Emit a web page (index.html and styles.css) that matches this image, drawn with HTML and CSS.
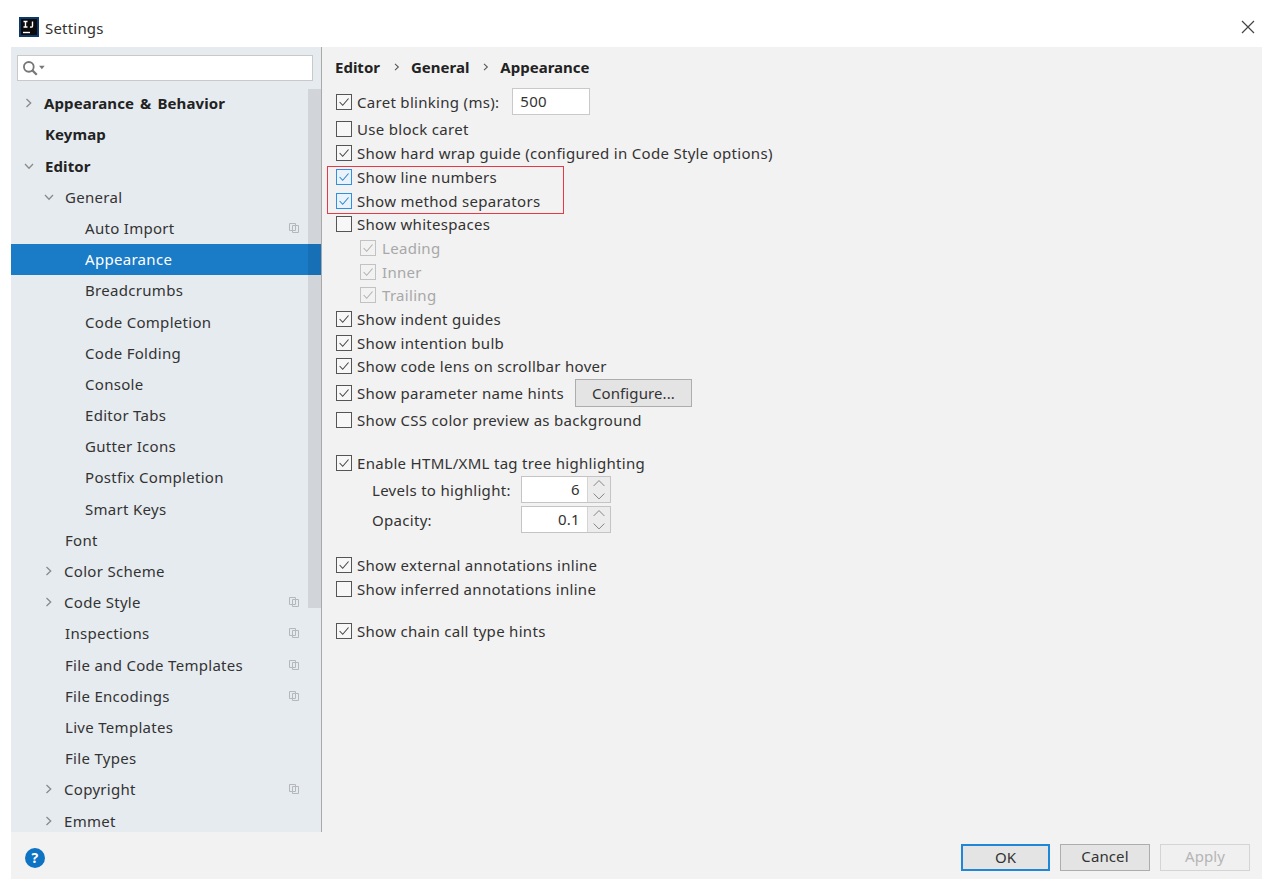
FILE: index.html
```html
<!DOCTYPE html>
<html lang="en">
<head>
<meta charset="utf-8">
<title>Settings</title>
<link rel="stylesheet" href="styles.css">
</head>
<body>
<svg class="defs" width="0" height="0" aria-hidden="true">
  <symbol id="check" viewBox="0 0 16 16"><path d="M3 8l3.5 3.8L13.2 4" fill="none" stroke="currentColor" stroke-width="1.2"/></symbol>
  <symbol id="right" viewBox="0 0 10 10"><path d="M2.5 1l4.2 4-4.2 4" fill="none" stroke="currentColor" stroke-width="1.3"/></symbol>
  <symbol id="down" viewBox="0 0 10 10"><path d="M1 3l4 4.2L9 3" fill="none" stroke="currentColor" stroke-width="1.3"/></symbol>
  <symbol id="copy" viewBox="0 0 12 12"><path d="M1.5 1.5h6v2h3v7h-6v-2h-3zM4.5 3.5h3v5h-3z" fill="none" stroke="currentColor"/></symbol>
</svg>
<div class="window">
  <header class="titlebar">
    <svg class="logo" viewBox="0 0 20 20" aria-hidden="true"><rect width="20" height="20" fill="#0c3a6a"/><rect x="2" y="2" width="16" height="16" fill="#0b0b0b"/><path d="M4 15.5h7" stroke="#fff" stroke-width="1.4"/><path d="M4.5 4.5h4M6.5 4.5v5M4.5 10h4M13.5 4.5v4.5c0 1-.8 1.3-2.5 1" fill="none" stroke="#fff" stroke-width="1.4"/></svg>
    <span class="title">Settings</span>
    <svg class="close" viewBox="0 0 14 14" aria-hidden="true"><path d="M1 1l12 12M13 1L1 13" stroke="#444" stroke-width="1.2"/></svg>
  </header>
  <div class="panel">
    <div class="main">
      <aside class="sidebar">
        <div class="search">
          <svg class="search-icon" viewBox="0 0 22 14" aria-hidden="true"><circle cx="6" cy="6" r="4.3" fill="none" stroke="#777" stroke-width="1.6"/><path d="M9 9l4 4" stroke="#777" stroke-width="2"/><path d="M15 5h5l-2.5 3z" fill="#777"/></svg>
        </div>
        <div class="thumb"></div>
        <nav class="tree">
          <div class="row lvl0 bold"><svg class="arrow"><use href="#right"/></svg><span>Appearance &amp; Behavior</span></div>
          <div class="row lvl0 bold"><i class="noarrow"></i><span>Keymap</span></div>
          <div class="row lvl0 bold"><svg class="arrow open"><use href="#down"/></svg><span>Editor</span></div>
          <div class="row lvl1"><svg class="arrow open"><use href="#down"/></svg><span>General</span></div>
          <div class="row lvl2"><span>Auto Import</span><svg class="copy"><use href="#copy"/></svg></div>
          <div class="row lvl2 selected"><span>Appearance</span></div>
          <div class="row lvl2"><span>Breadcrumbs</span></div>
          <div class="row lvl2"><span>Code Completion</span></div>
          <div class="row lvl2"><span>Code Folding</span></div>
          <div class="row lvl2"><span>Console</span></div>
          <div class="row lvl2"><span>Editor Tabs</span></div>
          <div class="row lvl2"><span>Gutter Icons</span></div>
          <div class="row lvl2"><span>Postfix Completion</span></div>
          <div class="row lvl2"><span>Smart Keys</span></div>
          <div class="row lvl1 plain"><span>Font</span></div>
          <div class="row lvl1"><svg class="arrow"><use href="#right"/></svg><span>Color Scheme</span></div>
          <div class="row lvl1"><svg class="arrow"><use href="#right"/></svg><span>Code Style</span><svg class="copy"><use href="#copy"/></svg></div>
          <div class="row lvl1 plain"><span>Inspections</span><svg class="copy"><use href="#copy"/></svg></div>
          <div class="row lvl1 plain"><span>File and Code Templates</span><svg class="copy"><use href="#copy"/></svg></div>
          <div class="row lvl1 plain"><span>File Encodings</span><svg class="copy"><use href="#copy"/></svg></div>
          <div class="row lvl1 plain"><span>Live Templates</span></div>
          <div class="row lvl1 plain"><span>File Types</span></div>
          <div class="row lvl1"><svg class="arrow"><use href="#right"/></svg><span>Copyright</span><svg class="copy"><use href="#copy"/></svg></div>
          <div class="row lvl1"><svg class="arrow"><use href="#right"/></svg><span>Emmet</span></div>
        </nav>
      </aside>
      <section class="content">
        <div class="crumbs"><span>Editor</span><svg class="sep"><use href="#right"/></svg><span>General</span><svg class="sep"><use href="#right"/></svg><span>Appearance</span></div>
        <div class="highlight"></div>
        <div class="opt first"><span class="cb"><svg><use href="#check"/></svg></span><span>Caret blinking (ms):</span><span class="field">500</span></div>
        <div class="opt"><span class="cb"></span><span>Use block caret</span></div>
        <div class="opt"><span class="cb"><svg><use href="#check"/></svg></span><span>Show hard wrap guide (configured in Code Style options)</span></div>
        <div class="opt"><span class="cb focus"><svg><use href="#check"/></svg></span><span>Show line numbers</span></div>
        <div class="opt"><span class="cb focus"><svg><use href="#check"/></svg></span><span>Show method separators</span></div>
        <div class="opt"><span class="cb"></span><span>Show whitespaces</span></div>
        <div class="opt sub off"><span class="cb"><svg><use href="#check"/></svg></span><span>Leading</span></div>
        <div class="opt sub off"><span class="cb"><svg><use href="#check"/></svg></span><span>Inner</span></div>
        <div class="opt sub off"><span class="cb"><svg><use href="#check"/></svg></span><span>Trailing</span></div>
        <div class="opt"><span class="cb"><svg><use href="#check"/></svg></span><span>Show indent guides</span></div>
        <div class="opt"><span class="cb"><svg><use href="#check"/></svg></span><span>Show intention bulb</span></div>
        <div class="opt"><span class="cb"><svg><use href="#check"/></svg></span><span>Show code lens on scrollbar hover</span></div>
        <div class="opt tall"><span class="cb"><svg><use href="#check"/></svg></span><span>Show parameter name hints</span><span class="btn configure">Configure...</span></div>
        <div class="opt"><span class="cb"></span><span>Show CSS color preview as background</span></div>
        <div class="opt gap"><span class="cb"><svg><use href="#check"/></svg></span><span>Enable HTML/XML tag tree highlighting</span></div>
        <div class="spin-row"><span class="spin-label">Levels to highlight:</span><span class="spin"><span class="spin-val">6</span><span class="spin-btns"><svg viewBox="0 0 20 14"><path d="M4 10l6-6 6 6" fill="none" stroke="#777"/></svg><svg viewBox="0 0 20 14"><path d="M4 4l6 6 6-6" fill="none" stroke="#777"/></svg></span></span></div>
        <div class="spin-row"><span class="spin-label">Opacity:</span><span class="spin"><span class="spin-val">0.1</span><span class="spin-btns"><svg viewBox="0 0 20 14"><path d="M4 10l6-6 6 6" fill="none" stroke="#777"/></svg><svg viewBox="0 0 20 14"><path d="M4 4l6 6 6-6" fill="none" stroke="#777"/></svg></span></span></div>
        <div class="opt gap2"><span class="cb"><svg><use href="#check"/></svg></span><span>Show external annotations inline</span></div>
        <div class="opt"><span class="cb"></span><span>Show inferred annotations inline</span></div>
        <div class="opt gap3"><span class="cb"><svg><use href="#check"/></svg></span><span>Show chain call type hints</span></div>
      </section>
    </div>
    <footer class="footer">
      <span class="help">?</span>
      <div class="actions">
        <span class="btn default">OK</span>
        <span class="btn">Cancel</span>
        <span class="btn disabled">Apply</span>
      </div>
    </footer>
  </div>
</div>
</body>
</html>
```
FILE: styles.css
```css
* { box-sizing: border-box; }
html, body { margin: 0; height: 100%; background: #fff; overflow: hidden; }
body { font-family: "Noto Sans", "Open Sans", sans-serif; font-size: 15px; color: #333; letter-spacing: .3px; }
.defs { position: absolute; }
.window { display: flex; flex-direction: column; height: 888px; }
.titlebar { height: 47px; flex: none; display: flex; align-items: center; padding: 0 23px 0 19px; }
.logo { width: 20px; height: 20px; margin-top: 7px; }
.title { margin-left: 6px; margin-top: 8px; font-size: 15px; color: #333; letter-spacing: .2px; }
.close { width: 14px; height: 14px; margin-left: auto; margin-top: 7px; }
.panel { margin: 0 16px 9px 11px; height: 832px; background: #f2f2f2; display: flex; flex-direction: column; }
.main { flex: 1; display: flex; min-height: 0; }
.sidebar { width: 311px; flex: none; background: #e6ebf0; border-right: 1px solid #a9a9a9; position: relative; overflow: hidden; }
.search { margin: 8px 8px 0 6px; height: 26px; background: #fff; border: 1px solid #c9c9c9; display: flex; align-items: center; padding-left: 4px; }
.search-icon { width: 25px; height: 16px; }
.thumb { position: absolute; left: 297px; top: 42px; width: 13px; height: 519px; background: rgba(0,0,0,.09); z-index: 2; }
.tree { margin-top: 6.6px; }
.row { height: 31.2px; display: flex; align-items: center; font-size: 15px; color: #333; white-space: nowrap; }
.bold { font-weight: 700; color: #222; letter-spacing: .1px; word-spacing: 2px; }
.arrow { width: 10px; height: 10px; flex: none; color: #8a8a8a; margin-right: 10px; }
.arrow.open { margin-right: 11px; }
.noarrow { width: 10px; flex: none; margin-right: 11px; }
.lvl0 { padding-left: 13px; }
.lvl1 { padding-left: 33px; }
.lvl1.plain { padding-left: 54px; }
.lvl2 { padding-left: 74px; }
.selected { background: #1a7bc7; color: #fff; }
.copy { width: 12px; height: 12px; color: #b4b8bc; margin-left: auto; margin-right: 21px; flex: none; }
.content { flex: 1; padding: 8px 0 0 13px; position: relative; font-size: 15px; }
.crumbs { height: 24px; display: flex; align-items: center; font-weight: 700; color: #222; margin-bottom: 7px; letter-spacing: 0; }
.sep { width: 8px; height: 8px; margin: 0 10px 0 13px; color: #555; }
.highlight { position: absolute; left: 5px; top: 119px; width: 237px; height: 48px; border: 1px solid #e53945; z-index: 1; }
.opt { height: 23.7px; display: flex; align-items: center; white-space: nowrap; color: #333; flex: none; }
.opt.first { height: 31.6px; }
.opt.tall { height: 30px; }
.opt.gap { margin-top: 19px; }
.opt.gap2 { margin-top: 19px; }
.opt.gap3 { margin-top: 18.5px; }
.cb { width: 16px; height: 16px; border: 1px solid #555; background: #f7f7f7; margin: 0 5px 0 1px; flex: none; color: #444; display: block; }
.cb svg { display: block; width: 14px; height: 14px; }
.cb.focus { border-color: #2f8fe0; color: #2f86cc; background: #eaf3fb; }
.sub { padding-left: 24px; color: #a8a8a8; }
.sub .cb { border-color: #c2c2c2; color: #b0b0b0; margin-right: 6px; background: #f2f2f2; }
.field { width: 78px; height: 27px; margin-left: 13px; background: #fff; border: 1px solid #c9c9c9; padding-left: 7px; line-height: 24px; }
.btn { display: flex; align-items: center; justify-content: center; width: 90px; height: 27px; padding-bottom: 3px; background: #e4e4e4; border: 1px solid #adadad; color: #333; letter-spacing: .1px; }
.configure { width: 117px; height: 28px; padding-bottom: 0; margin-left: 11px; }
.spin-row { display: flex; align-items: center; height: 30px; }
.spin-label { width: 186px; padding-left: 37px; white-space: nowrap; flex: none; }
.spin { width: 90px; height: 27px; display: flex; border: 1px solid #c4c4c4; background: #fff; }
.spin-val { width: 65px; text-align: right; padding-right: 7px; line-height: 24px; }
.spin-btns { flex: 1; display: flex; flex-direction: column; background: #ececec; border-left: 1px solid #d4d4d4; }
.spin-btns svg { flex: 1; width: 100%; height: 12px; min-height: 0; }
.footer { height: 47px; flex: none; display: flex; align-items: center; padding: 4px 0 0 14px; }
.help { width: 20px; height: 20px; border-radius: 50%; background: #0f73c4; color: #fff; font-weight: 700; font-size: 14px; display: flex; align-items: center; justify-content: center; }
.actions { margin-left: auto; display: flex; gap: 10px; margin-right: 12px; }
.default { width: 89px; border: 2px solid #1f87d6; padding-bottom: 1px; }
.disabled { background: #f0f0f0; border-color: #d4d4d4; color: #b5b5b5; }
```
